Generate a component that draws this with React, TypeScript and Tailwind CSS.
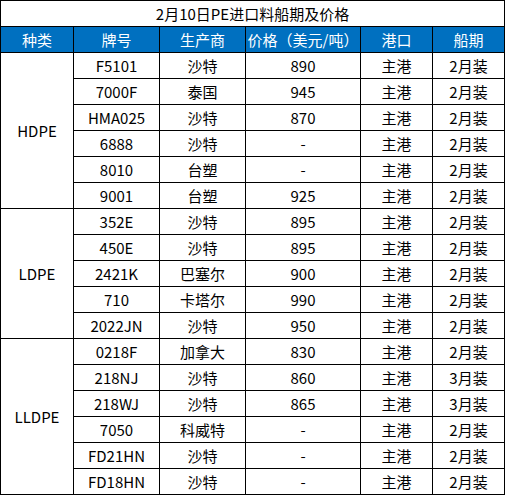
import React from "react";

interface Row {
  grade: string;
  maker: string;
  price: string;
  port: string;
  ship: string;
}

interface Group {
  type: string;
  rows: Row[];
}

const groups: Group[] = [
  {
    type: "HDPE",
    rows: [
      { grade: "F5101", maker: "沙特", price: "890", port: "主港", ship: "2月装" },
      { grade: "7000F", maker: "泰国", price: "945", port: "主港", ship: "2月装" },
      { grade: "HMA025", maker: "沙特", price: "870", port: "主港", ship: "2月装" },
      { grade: "6888", maker: "沙特", price: "-", port: "主港", ship: "2月装" },
      { grade: "8010", maker: "台塑", price: "-", port: "主港", ship: "2月装" },
      { grade: "9001", maker: "台塑", price: "925", port: "主港", ship: "2月装" },
    ],
  },
  {
    type: "LDPE",
    rows: [
      { grade: "352E", maker: "沙特", price: "895", port: "主港", ship: "2月装" },
      { grade: "450E", maker: "沙特", price: "895", port: "主港", ship: "2月装" },
      { grade: "2421K", maker: "巴塞尔", price: "900", port: "主港", ship: "2月装" },
      { grade: "710", maker: "卡塔尔", price: "990", port: "主港", ship: "2月装" },
      { grade: "2022JN", maker: "沙特", price: "950", port: "主港", ship: "2月装" },
    ],
  },
  {
    type: "LLDPE",
    rows: [
      { grade: "0218F", maker: "加拿大", price: "830", port: "主港", ship: "2月装" },
      { grade: "218NJ", maker: "沙特", price: "860", port: "主港", ship: "3月装" },
      { grade: "218WJ", maker: "沙特", price: "865", port: "主港", ship: "3月装" },
      { grade: "7050", maker: "科威特", price: "-", port: "主港", ship: "2月装" },
      { grade: "FD21HN", maker: "沙特", price: "-", port: "主港", ship: "2月装" },
      { grade: "FD18HN", maker: "沙特", price: "-", port: "主港", ship: "2月装" },
    ],
  },
];

const headers = ["种类", "牌号", "生产商", "价格（美元/吨）", "港口", "船期"];

const cell = "bg-white flex items-center justify-center h-[25px]";

const App: React.FC = () => {
  return (
    <div
      className="w-[505px] h-[495px] bg-white text-black text-[15px] leading-none"
      style={{ fontFamily: '"Noto Sans CJK SC", "Noto Sans", sans-serif' }}
    >
      <div className="grid grid-cols-[72px_85px_85px_114px_71px_71px] gap-px p-px bg-black w-[505px]">
        {/* title */}
        <div className={`${cell} col-span-6`}>2月10日PE进口料船期及价格</div>

        {/* header */}
        {headers.map((h) => (
          <div key={h} className="bg-[#0070c0] text-white flex items-center justify-center h-[25px]">
            {h}
          </div>
        ))}

        {groups.map((g) => (
          <React.Fragment key={g.type}>
            <div
              className="bg-white flex items-center justify-center"
              style={{ gridRow: `span ${g.rows.length}` }}
            >
              {g.type}
            </div>
            {g.rows.map((r) => (
              <React.Fragment key={r.grade}>
                <div className={cell}>{r.grade}</div>
                <div className={cell}>{r.maker}</div>
                <div className={cell}>{r.price}</div>
                <div className={cell}>{r.port}</div>
                <div className={cell}>{r.ship}</div>
              </React.Fragment>
            ))}
          </React.Fragment>
        ))}
      </div>
    </div>
  );
};

export default App;
